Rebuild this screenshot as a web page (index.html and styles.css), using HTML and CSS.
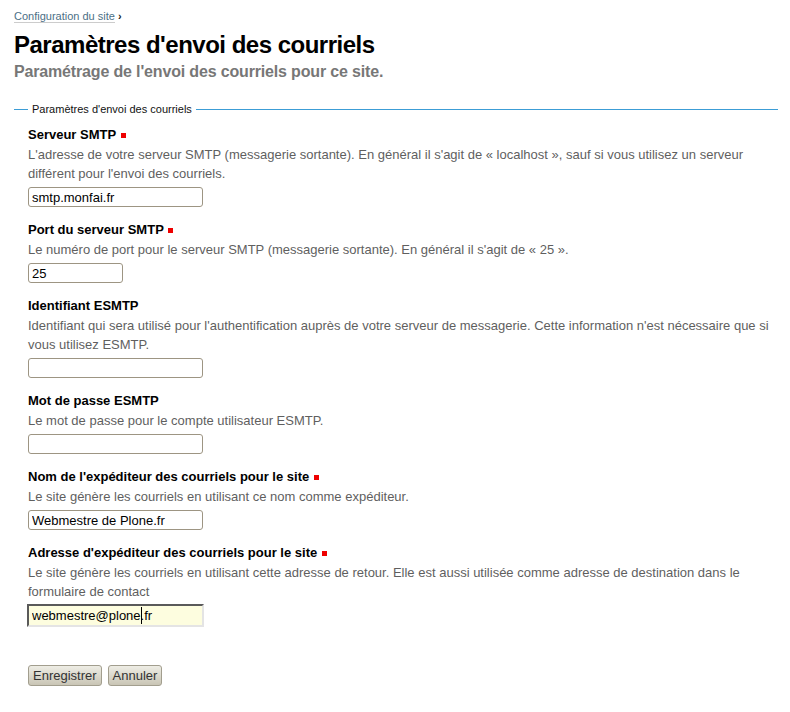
FILE: index.html
```html
<!DOCTYPE html>
<html lang="fr">
<head>
<meta charset="utf-8">
<title>Paramètres d'envoi des courriels</title>
<link rel="stylesheet" href="styles.css">
</head>
<body>
<div class="page">
  <div class="breadcrumb"><a href="#" class="crumb">Configuration du site</a> <span class="sep">›</span></div>
  <h1 class="title">Paramètres d'envoi des courriels</h1>
  <p class="description">Paramétrage de l'envoi des courriels pour ce site.</p>

  <form class="form">
    <fieldset class="group">
      <legend class="legend">Paramètres d'envoi des courriels</legend>

      <div class="field">
        <label class="label">Serveur SMTP <span class="required"></span></label>
        <div class="help">L'adresse de votre serveur SMTP (messagerie sortante). En général il s'agit de « localhost », sauf si vous utilisez un serveur différent pour l'envoi des courriels.</div>
        <input class="input" type="text" value="smtp.monfai.fr">
      </div>

      <div class="field">
        <label class="label">Port du serveur SMTP <span class="required"></span></label>
        <div class="help">Le numéro de port pour le serveur SMTP (messagerie sortante). En général il s'agit de « 25 ».</div>
        <input class="input input-short" type="text" value="25">
      </div>

      <div class="field">
        <label class="label">Identifiant ESMTP</label>
        <div class="help">Identifiant qui sera utilisé pour l'authentification auprès de votre serveur de messagerie. Cette information n'est nécessaire que si vous utilisez ESMTP.</div>
        <input class="input" type="text" value="">
      </div>

      <div class="field">
        <label class="label">Mot de passe ESMTP</label>
        <div class="help">Le mot de passe pour le compte utilisateur ESMTP.</div>
        <input class="input" type="password" value="">
      </div>

      <div class="field">
        <label class="label">Nom de l'expéditeur des courriels pour le site <span class="required"></span></label>
        <div class="help">Le site génère les courriels en utilisant ce nom comme expéditeur.</div>
        <input class="input" type="text" value="Webmestre de Plone.fr">
      </div>

      <div class="field">
        <label class="label">Adresse d'expéditeur des courriels pour le site <span class="required"></span></label>
        <div class="help">Le site génère les courriels en utilisant cette adresse de retour. Elle est aussi utilisée comme adresse de destination dans le formulaire de contact</div>
        <span class="focus-wrap"><input class="input input-focused" type="text" value="webmestre@plone.fr"><span class="caret"></span></span>
      </div>
    </fieldset>

    <div class="controls">
      <button type="button" class="button">Enregistrer</button>
      <button type="button" class="button">Annuler</button>
    </div>
  </form>
</div>
</body>
</html>
```

FILE: styles.css
```css
html, body {
  margin: 0;
  padding: 0;
  background: #ffffff;
}

body {
  font-family: "Liberation Sans", Arial, sans-serif;
  font-size: 13px;
  color: #000000;
}

.page {
  padding: 9px 12px 20px 14px;
}

.breadcrumb {
  font-size: 11px;
  line-height: 14px;
  color: #222222;
}

.crumb {
  color: #4b6f86;
  text-decoration: none;
  border-bottom: 1px solid #cccccc;
}

.sep {
  color: #222222;
  font-weight: bold;
}

.title {
  margin: 8px 0 0;
  font-size: 24px;
  line-height: 28px;
  font-weight: bold;
  letter-spacing: -0.5px;
  color: #000000;
}

.description {
  margin: 3px 0 0;
  font-size: 16px;
  line-height: 20px;
  font-weight: bold;
  letter-spacing: -0.16px;
  color: #777777;
}

.form {
  margin: 0;
}

.group {
  margin: 20px 0 0;
  padding: 9px 8px 0 14px;
  border: none;
  border-top: 1px solid #3c9dd6;
  min-width: 0;
}

.legend {
  padding: 0 4px;
  font-size: 11px;
  line-height: 14px;
  color: #111111;
}

.field {
  display: flex;
  flex-direction: column;
  align-items: flex-start;
  margin-bottom: 13px;
}

.label {
  display: block;
  font-size: 13px;
  line-height: 20px;
  font-weight: bold;
  color: #000000;
}

.required {
  display: inline-block;
  width: 5px;
  height: 5px;
  background: #ee0000;
  margin-left: 1px;
  vertical-align: 1px;
}

.help {
  font-size: 13px;
  line-height: 19px;
  color: #5f5f5f;
}

.input {
  box-sizing: border-box;
  margin: 4px 0 0;
  width: 175px;
  height: 20px;
  padding: 0 3px;
  border: 1px solid #9d9583;
  border-radius: 3px;
  background: #ffffff;
  font-family: "Liberation Sans", Arial, sans-serif;
  font-size: 13px;
  color: #000000;
  outline: none;
}

.input-short {
  width: 95px;
}

.focus-wrap {
  position: relative;
  display: block;
  margin: 3px 0 0 -1px;
}

.input-focused {
  margin: 0;
  width: 177px;
  height: 23px;
  padding: 0 3px;
  border-radius: 0;
  border-style: solid;
  border-width: 2px;
  border-color: #5a5a5a #e4e4e4 #e4e4e4 #5a5a5a;
  background: #fdfddf;
}

.caret {
  position: absolute;
  left: 114px;
  top: 3px;
  width: 1px;
  height: 17px;
  background: #000000;
}

.controls {
  display: flex;
  gap: 6px;
  margin-top: 25px;
  padding-left: 14px;
}

.button {
  box-sizing: border-box;
  height: 21px;
  padding: 0 4px;
  border: 1px solid #a29e8e;
  border-radius: 3px;
  background: linear-gradient(#eeede5, #c9c5b5);
  font-family: "Liberation Sans", Arial, sans-serif;
  font-size: 13px;
  line-height: 19px;
  color: #333333;
  cursor: pointer;
}
```
